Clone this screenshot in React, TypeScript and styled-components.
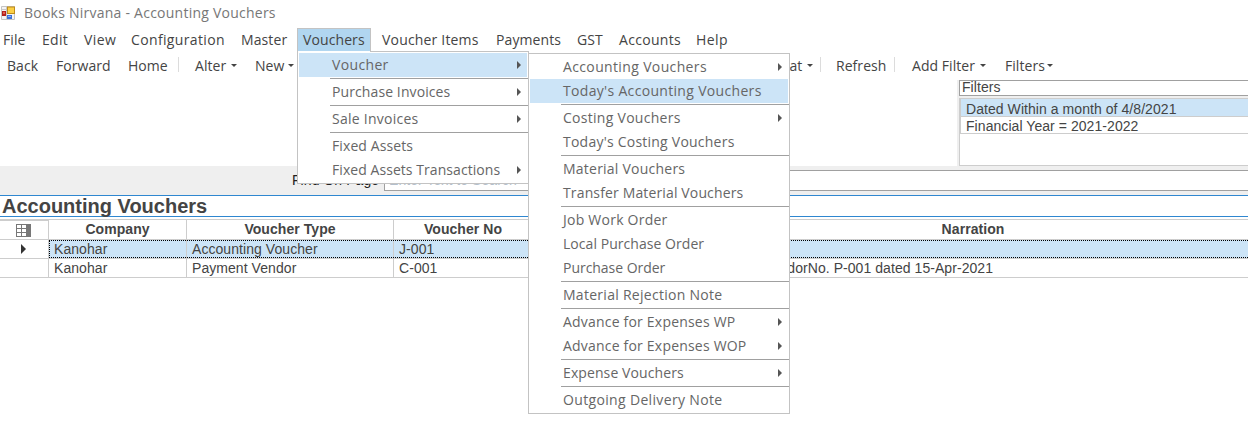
import React from 'react';
import styled, { createGlobalStyle, css } from 'styled-components';

const Global = createGlobalStyle`
  * { box-sizing: border-box; }
  body { margin: 0; background: #fff; overflow: hidden; }
`;

const ui = css`
  font-family: 'Open Sans', 'Noto Sans', sans-serif;
  font-size: 14px;
  white-space: pre;
`;

const Window = styled.div`
  position: relative;
  width: 1248px;
  height: 437px;
  overflow: hidden;
  background: #fff;
  color: #444;
  font: 14px 'Liberation Sans', Arial, sans-serif;
  letter-spacing: 0.06px;
`;

const TitleBar = styled.header`
  ${ui}
  display: flex;
  align-items: center;
  height: 26px;
  padding-left: 1px;
  gap: 9px;
  color: #777;
  letter-spacing: 0.24px;
`;

const TitleText = styled.span`
  margin-top: -2px;
`;

const MenuBar = styled.nav`
  ${ui}
  display: flex;
  height: 25px;
  padding: 2px 0 0 3px;
  letter-spacing: 0.1px;
`;

const MenuItem = styled.div<{ $w: number; $open?: boolean; $track?: number }>`
  width: ${p => p.$w}px;
  flex: none;
  line-height: 24px;
  ${p => p.$track !== undefined && `letter-spacing: ${p.$track}px;`}
  ${p => p.$open && css`
    margin-right: 11px;
    padding-left: 5px;
    line-height: 22px;
    background: #b1d6f0;
    border: 1px solid #c3c3c3;
    border-bottom: 0;
  `}
`;

const ToolBar = styled.div`
  ${ui}
  display: flex;
  height: 29px;
  padding-left: 7px;
  letter-spacing: 0.05px;
`;

const Tool = styled.div<{ $w: number; $caret?: boolean }>`
  display: flex;
  flex: none;
  width: ${p => p.$w}px;
  line-height: 29px;
  ${p => p.$caret && css`
    &::after {
      content: '';
      margin: 13px 0 0;
      width: 0;
      height: 0;
      border: 3px solid transparent;
      border-top-color: #444;
      border-bottom: 0;
    }
  `}
`;

const ToolLabel = styled.span<{ $w: number }>`
  width: ${p => p.$w}px;
`;

const ToolSep = styled.i<{ $gap: number }>`
  flex: none;
  width: 1px;
  height: 15px;
  margin: 6px ${p => p.$gap}px 0 0;
  background: #dcdcdc;
`;

const Upper = styled.section`
  display: flex;
  justify-content: flex-end;
  height: 86px;
`;

const FilterPane = styled.aside`
  width: 291px;
  padding-left: 2px;
  background: #efefef;
  overflow: hidden;
`;

const FilterBox = styled.div`
  width: 300px;
  height: 16px;
  padding-left: 2px;
  line-height: 13px;
  background: #fff;
  border: 1px solid #a0a0a0;
`;

const FilterList = styled.div`
  width: 300px;
  height: 68px;
  margin-top: 2px;
  background: #fff;
  border: 1px solid #cdcdcd;
`;

const FilterRow = styled.div<{ $on?: boolean }>`
  height: ${p => (p.$on ? 18 : 17)}px;
  padding-left: 5px;
  line-height: ${p => (p.$on ? 20 : 18)}px;
  background: ${p => (p.$on ? '#cce4f7' : '#fff')};
  border-left: 1px solid #cdcdcd;
  border-bottom: 1px solid #cdcdcd;
`;

const FindBar = styled.div`
  display: flex;
  height: 29px;
  padding: 4px 0 0 292px;
  background: #efefef;
  color: #222;
`;

const FindLabel = styled.label`
  width: 92px;
  flex: none;
  line-height: 21px;
`;

const FindInput = styled.div`
  flex: none;
  width: 880px;
  height: 21px;
  padding-left: 4px;
  line-height: 19px;
  background: #fff;
  border: 1px solid #a0a0a0;
  color: #b4bfcc;
`;

const Heading = styled.h1`
  height: 22px;
  margin: 0 0 2px;
  padding-left: 2px;
  line-height: 21px;
  font-size: 20px;
  letter-spacing: 0;
  white-space: nowrap;
  border-top: 1px solid #2f87d0;
  border-bottom: 1px solid #2f87d0;
`;

const Grid = styled.div`
  border-top: 1px solid #cdcdcd;
`;

const GridRow = styled.div<{ $head?: boolean; $on?: boolean }>`
  display: grid;
  grid-template-columns: 49px 138px 207px 139px 165px 551px;
  height: ${p => (p.$head ? 20 : 19)}px;
  line-height: 19px;
  border-bottom: 1px solid #cdcdcd;
  position: relative;
  ${p => p.$head && 'font-weight: bold; text-align: center;'}
  ${p => p.$on && css`
    background: linear-gradient(90deg, #fff 49px, #cce4f7 49px);
    &::after {
      content: '';
      position: absolute;
      inset: 0 -2px 0 49px;
      border: 1px dotted #000;
    }
  `}
`;

const Cell = styled.div<{ $pad?: number }>`
  padding-left: ${p => p.$pad ?? 5}px;
  border-right: 1px solid #cdcdcd;
  white-space: nowrap;
  overflow: hidden;
`;

const Corner = styled(Cell)<{ $lip?: boolean }>`
  display: flex;
  justify-content: center;
  align-items: center;
  padding: 0 2px 0 0;
  ${p => p.$lip && 'border-top: 1px solid #cdcdcd;'}
`;

const Popup = styled.div<{ $x: number; $y: number; $w: number; $tab?: number }>`
  ${ui}
  position: absolute;
  left: ${p => p.$x}px;
  top: ${p => p.$y}px;
  width: ${p => p.$w}px;
  padding: 1px 0;
  background: #fff;
  border: 1px solid #c3c3c3;
  color: #666;
  ${p => p.$tab && css`
    &::before {
      content: '';
      position: absolute;
      top: -1px;
      left: 0;
      width: ${p.$tab}px;
      height: 1px;
      background: #fff;
    }
  `}
`;

const PopupRow = styled.div<{ $on?: boolean }>`
  display: flex;
  align-items: center;
  justify-content: space-between;
  height: 24px;
  margin: 0 1px;
  padding: 0 6px 0 33px;
  background: ${p => (p.$on ? '#cce4f7' : 'transparent')};
`;

const PopupLabel = styled.span<{ $track: number }>`
  margin-top: -2px;
  letter-spacing: ${p => p.$track}px;
`;

const Rule = styled.div`
  height: 1px;
  margin: 1px 0 1px 32px;
  background: #a0a0a0;
`;

const Arrow = () => (
  <svg width="4" height="8" viewBox="0 0 4 8"><path d="M0 0L4 4L0 8Z" fill="#555" /></svg>
);

const RowMarker = () => (
  <svg width="5" height="10" viewBox="0 0 5 10"><path d="M0 0L5 5L0 10Z" fill="#333" /></svg>
);

const AppIcon = () => (
  <svg width="14" height="14" viewBox="0 0 14 14">
    <path d="M.5 .5H13.5V13.5H.5Z" fill="#f4f4f4" stroke="#c4c4c4" />
    <path d="M1 3.5H6M5.5 1V13" stroke="#c8c8c8" />
    <rect x="1" y="5" width="4" height="5" fill="#b3201c" />
    <rect x="2" y="6" width="2" height="2" fill="#e0604f" />
    <rect x="6.5" y="1" width="7" height="6.5" fill="#fbcf45" stroke="#bf8c1a" />
    <rect x="6" y="9" width="5" height="4" fill="#3c70d8" />
    <rect x="7" y="10" width="3" height="1" fill="#86b0f5" />
  </svg>
);

const GridIcon = () => (
  <svg width="15" height="13" viewBox="0 0 15 13">
    <rect x=".5" y=".5" width="14" height="12" fill="#fff" stroke="#777" />
    <path d="M5.5 0V13M0 4.5H10M0 8.5H10" stroke="#777" />
    <rect x="10" width="5" height="13" fill="#777" />
  </svg>
);

type Entry = { t: string; track?: number; sub?: boolean; on?: boolean } | null;

const voucherMenu: Entry[] = [
  { t: 'Voucher', track: 0.35, sub: true, on: true }, null,
  { t: 'Purchase Invoices', sub: true }, null,
  { t: 'Sale Invoices', track: 0.25, sub: true }, null,
  { t: 'Fixed Assets' },
  { t: 'Fixed Assets Transactions', track: 0.06, sub: true },
];

const subMenu: Entry[] = [
  { t: 'Accounting Vouchers', track: 0.36, sub: true },
  { t: "Today's Accounting Vouchers", track: 0.32, on: true }, null,
  { t: 'Costing Vouchers', track: 0.28, sub: true },
  { t: "Today's Costing Vouchers", track: 0.23 }, null,
  { t: 'Material Vouchers', track: 0.23 },
  { t: 'Transfer Material Vouchers', track: 0.14 }, null,
  { t: 'Job Work Order', track: 0.24 },
  { t: 'Local Purchase Order', track: 0.05 },
  { t: 'Purchase Order', track: -0.03 }, null,
  { t: 'Material Rejection Note', track: 0.28 }, null,
  { t: 'Advance for Expenses WP', track: 0.2, sub: true },
  { t: 'Advance for Expenses WOP', track: 0.2, sub: true }, null,
  { t: 'Expense Vouchers', sub: true }, null,
  { t: 'Outgoing Delivery Note', track: 0.34 },
];

type MenuProps = { items: Entry[]; x: number; y: number; w: number; tab?: number };

const Menu = ({ items, x, y, w, tab }: MenuProps) => (
  <Popup $x={x} $y={y} $w={w} $tab={tab}>
    {items.map((e, i) =>
      e ? (
        <PopupRow key={i} $on={e.on}>
          <PopupLabel $track={e.track ?? 0.1}>{e.t}</PopupLabel>
          {e.sub && <Arrow />}
        </PopupRow>
      ) : (
        <Rule key={i} />
      ),
    )}
  </Popup>
);

export default function App() {
  return (
    <Window>
      <Global />
      <TitleBar><AppIcon /><TitleText>Books Nirvana - Accounting Vouchers</TitleText></TitleBar>
      <MenuBar>
        <MenuItem $w={39}>File</MenuItem>
        <MenuItem $w={42} $track={0.3}>Edit</MenuItem>
        <MenuItem $w={47} $track={0.4}>View</MenuItem>
        <MenuItem $w={110} $track={0.36}>Configuration</MenuItem>
        <MenuItem $w={56}>Master</MenuItem>
        <MenuItem $w={74} $open>Vouchers</MenuItem>
        <MenuItem $w={114} $track={0.18}>Voucher Items</MenuItem>
        <MenuItem $w={81}>Payments</MenuItem>
        <MenuItem $w={42}>GST</MenuItem>
        <MenuItem $w={77} $track={0.3}>Accounts</MenuItem>
        <MenuItem $w={40} $track={0.4}>Help</MenuItem>
      </MenuBar>
      <ToolBar>
        <Tool $w={49}>Back</Tool>
        <Tool $w={72}>Forward</Tool>
        <Tool $w={50}>Home</Tool>
        <ToolSep $gap={16} />
        <Tool $w={60} $caret><ToolLabel $w={36}>Alter</ToolLabel></Tool>
        <Tool $w={500} $caret><ToolLabel $w={33}>New</ToolLabel></Tool>
        <Tool $w={65} $caret><ToolLabel $w={52}>Format</ToolLabel></Tool>
        <ToolSep $gap={15} />
        <Tool $w={58}>Refresh</Tool>
        <ToolSep $gap={17} />
        <Tool $w={93} $caret><ToolLabel $w={68}>Add Filter</ToolLabel></Tool>
        <Tool $w={60} $caret><ToolLabel $w={42}>Filters</ToolLabel></Tool>
      </ToolBar>
      <Upper>
        <FilterPane>
          <FilterBox>Filters</FilterBox>
          <FilterList>
            <FilterRow $on>Dated Within a month of 4/8/2021</FilterRow>
            <FilterRow>Financial Year = 2021-2022</FilterRow>
          </FilterList>
        </FilterPane>
      </Upper>
      <FindBar>
        <FindLabel>Find On Page</FindLabel>
        <FindInput>Enter Text to Search</FindInput>
      </FindBar>
      <Heading>Accounting Vouchers</Heading>
      <Grid>
        <GridRow $head>
          <Corner $lip><GridIcon /></Corner>
          <Cell $pad={0}>Company</Cell>
          <Cell $pad={0}>Voucher Type</Cell>
          <Cell $pad={0}>Voucher No</Cell>
          <Cell />
          <Cell $pad={0}>Narration</Cell>
        </GridRow>
        <GridRow $on>
          <Corner><RowMarker /></Corner>
          <Cell>Kanohar</Cell>
          <Cell>Accounting Voucher</Cell>
          <Cell>J-001</Cell>
          <Cell />
          <Cell />
        </GridRow>
        <GridRow>
          <Cell />
          <Cell>Kanohar</Cell>
          <Cell>Payment Vendor</Cell>
          <Cell>C-001</Cell>
          <Cell />
          <Cell $pad={65}>VendorNo. P-001 dated 15-Apr-2021</Cell>
        </GridRow>
      </Grid>
      <Menu items={voucherMenu} x={297} y={51} w={232} tab={72} />
      <Menu items={subMenu} x={528} y={53} w={262} />
    </Window>
  );
}
